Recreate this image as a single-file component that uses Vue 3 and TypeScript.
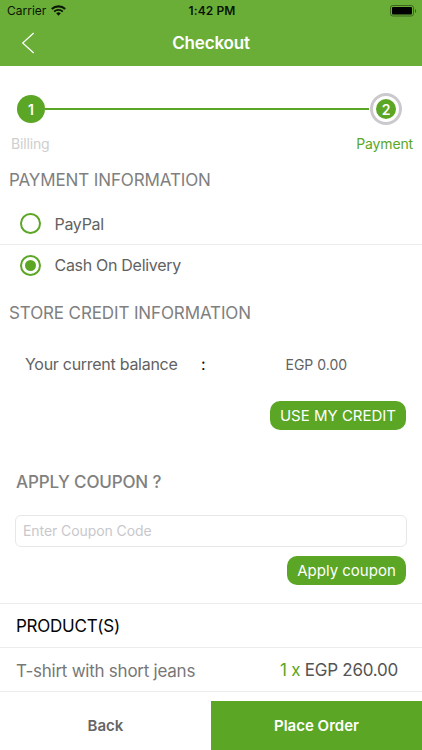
<script setup lang="ts">
import { ref } from 'vue'

interface Method {
  id: string
  label: string
}
interface Product {
  name: string
  qty: number
  price: string
}

const methods: Method[] = [
  { id: 'paypal', label: 'PayPal' },
  { id: 'cod', label: 'Cash On Delivery' },
]
const selected = ref('cod')
const coupon = ref('')
const products: Product[] = [{ name: 'T-shirt with short jeans', qty: 1, price: 'EGP 260.00' }]
</script>

<template>
  <div class="screen">
    <header class="top">
      <div class="status">
        <div class="carrier">
          <span>Carrier</span>
          <svg class="wifi" width="15" height="11" viewBox="0 0 15 11">
            <path d="M0.8 4.1A9.6 9.6 0 0 1 14.2 4.1" fill="none" stroke="#0b1504" stroke-width="2.1" />
            <path d="M3.2 6.6A6.2 6.2 0 0 1 11.8 6.6" fill="none" stroke="#0b1504" stroke-width="1.9" />
            <path d="M5.2 8.3A3.4 3.4 0 0 1 9.8 8.3L7.5 10.7Z" fill="#0b1504" />
          </svg>
        </div>
        <span class="time">1:42 PM</span>
        <svg class="battery" width="27" height="12" viewBox="0 0 27 12">
          <rect x="0.5" y="0.5" width="23" height="10.5" rx="2.3" fill="none" stroke="#3c6420" />
          <rect x="2" y="2" width="20" height="7.5" rx="1" fill="#000" />
          <path d="M25 4v4c1.6-.6 1.6-3.4 0-4z" fill="#3c6420" />
        </svg>
      </div>
      <div class="nav">
        <svg class="chevron" width="14" height="22" viewBox="0 0 14 22">
          <path d="M12.7 1L1.7 11L12.7 21" fill="none" stroke="#fff" stroke-width="1.2" />
        </svg>
        <h1>Checkout</h1>
      </div>
    </header>

    <main>
      <div class="steps">
        <div class="dot done">1</div>
        <div class="track"></div>
        <div class="ring"><div class="dot current">2</div></div>
      </div>
      <div class="step-labels">
        <span class="billing">Billing</span>
        <span class="payment">Payment</span>
      </div>

      <h2 class="title-payment">PAYMENT INFORMATION</h2>
      <div class="methods">
        <div v-for="m in methods" :key="m.id" class="method" @click="selected = m.id">
          <span class="radio"><i v-if="selected === m.id"></i></span>
          <span class="method-label">{{ m.label }}</span>
        </div>
      </div>

      <h2 class="title-credit">STORE CREDIT INFORMATION</h2>
      <div class="balance">
        <span class="balance-label">Your current balance</span>
        <span class="colon">:</span>
        <span class="amount">EGP 0.00</span>
      </div>
      <div class="action"><button class="pill credit">USE MY CREDIT</button></div>

      <h2 class="title-coupon">APPLY COUPON ?</h2>
      <input v-model="coupon" class="coupon" type="text" placeholder="Enter Coupon Code" />
      <div class="action"><button class="pill apply">Apply coupon</button></div>

      <section class="products">
        <h3><span>PRODUCT(S)</span></h3>
        <div v-for="p in products" :key="p.name" class="product">
          <span class="name">{{ p.name }}</span>
          <span class="price"><b>{{ p.qty }} x</b> {{ p.price }}</span>
        </div>
      </section>
    </main>

    <footer>
      <button class="back"><span>Back</span></button>
      <button class="place"><span>Place Order</span></button>
    </footer>
  </div>
</template>

<style>
body {
  margin: 0;
  background: #fff;
}
</style>

<style scoped>
.screen {
  box-sizing: border-box;
  width: 422px;
  height: 750px;
  display: flex;
  flex-direction: column;
  overflow: hidden;
  background: #fff;
  font-family: Inter, "Liberation Sans", sans-serif;
  color: #626262;
}
button {
  border: 0;
  padding: 0;
  font-family: inherit;
}
h1, h2, h3 { margin: 0; }
.top {
  height: 66px;
  flex: none;
  background: #6aae38;
}
.status {
  height: 21px;
  display: grid;
  grid-template-columns: 1fr auto 1fr;
  align-items: center;
  padding: 0 5px 0 7px;
  color: #0b1504;
  font-size: 12px;
}
.carrier {
  display: flex;
  align-items: center;
  gap: 5px;
}
.time {
  font-weight: 600;
  letter-spacing: 0.1px;
}
.battery { justify-self: end; }
.nav {
  height: 44px;
  display: grid;
  grid-template-columns: 60px 1fr 60px;
  align-items: center;
}
.chevron { margin-left: 21px; }
h1 {
  text-align: center;
  color: #fff;
  font-size: 17px;
  font-weight: 600;
  line-height: 22px;
  letter-spacing: -0.15px;
}
main {
  flex: 1;
  display: flex;
  flex-direction: column;
}
.steps {
  display: flex;
  align-items: center;
  height: 32px;
  margin: 27px 20px 0 17px;
}
.dot {
  display: flex;
  align-items: center;
  justify-content: center;
  border-radius: 50%;
  background: #5ba624;
  color: #fff;
  font-weight: 600;
}
.done {
  width: 28px;
  height: 28px;
  font-size: 14px;
}
.track {
  flex: 1;
  height: 2px;
  margin-right: 1px;
  background: #5ba624;
}
.ring {
  box-sizing: border-box;
  width: 32px;
  height: 32px;
  padding: 3px;
  border: 3px solid #cbc9ce;
  border-radius: 50%;
}
.current {
  width: 20px;
  height: 20px;
  font-size: 14px;
}
.step-labels {
  display: flex;
  justify-content: space-between;
  margin: 9px 9px 0 11px;
  font-size: 14px;
  line-height: 20px;
  letter-spacing: -0.15px;
}
.billing { color: #cecece; }
.payment { color: #5ba624; }
h2 {
  color: #808080;
  font-size: 17px;
  font-weight: 400;
  line-height: 22px;
  letter-spacing: -0.12px;
}
.title-payment { margin: 15px 0 0 9px; }
.methods { margin-top: 12px; }
.method {
  display: flex;
  align-items: center;
  height: 41px;
  padding-left: 20px;
  gap: 13.5px;
}
.method + .method {
  height: 40px;
  border-top: 1px solid #ececec;
}
.radio {
  box-sizing: border-box;
  width: 21px;
  height: 21px;
  display: flex;
  align-items: center;
  justify-content: center;
  border: 2px solid #5ba624;
  border-radius: 50%;
}
.radio i {
  width: 11px;
  height: 11px;
  border-radius: 50%;
  background: #5ba624;
}
.method-label {
  font-size: 16px;
  letter-spacing: -0.3px;
}
.title-credit { margin: 17px 0 0 9px; }
.balance {
  display: grid;
  grid-template-columns: 176px 84.5px 1fr;
  align-items: center;
  height: 30px;
  margin: 25px 0 0 25px;
}
.balance-label {
  font-size: 16px;
  letter-spacing: -0.28px;
}
.colon {
  color: #111;
  font-size: 16px;
}
.amount { font-size: 14px; }
.action {
  display: flex;
  justify-content: flex-end;
  padding-right: 16px;
}
.pill {
  height: 29px;
  border-radius: 10px;
  background: #5ba624;
  color: #fff;
  font-size: 15px;
}
.credit {
  width: 136px;
  margin-top: 22px;
}
.title-coupon {
  margin: 41px 0 0 16px;
  font-weight: 500;
  font-size: 17px;
  letter-spacing: -0.15px;
}
.coupon {
  box-sizing: border-box;
  height: 32px;
  margin: 22px 15px 0;
  padding: 0 7px 1px;
  border: 1px solid #e7e7e7;
  border-radius: 6px;
  background: #fff;
  font: 14px Inter, "Liberation Sans", sans-serif;
  letter-spacing: -0.08px;
  outline: 0;
}
.coupon::placeholder {
  color: #c8c8cc;
  opacity: 1;
}
.apply {
  width: 119px;
  margin-top: 9px;
}
.products { margin-top: 18px; }
h3 {
  display: flex;
  align-items: center;
  box-sizing: border-box;
  height: 44px;
  padding: 1px 0 0 16px;
  border-top: 1px solid #ececec;
  color: #050505;
  font-size: 17px;
  font-weight: 400;
  letter-spacing: -0.25px;
}
.product {
  display: flex;
  align-items: center;
  justify-content: space-between;
  height: 43px;
  padding: 0 24px 0 16px;
  border-top: 1px solid #ececec;
  border-bottom: 1px solid #ececec;
  font-size: 17px;
  letter-spacing: -0.25px;
}
.name {
  padding-top: 2px;
  color: #777;
}
.price { color: #555; }
.price b {
  color: #5ba624;
  font-weight: 400;
}
footer {
  display: flex;
  flex: none;
  height: 49px;
}
footer button {
  flex: 1;
  padding-bottom: 1px;
  font-size: 15px;
  font-weight: 600;
}
.back {
  background: #fff;
  color: #666;
}
.place {
  background: #5ba624;
  color: #fff;
}
</style>
